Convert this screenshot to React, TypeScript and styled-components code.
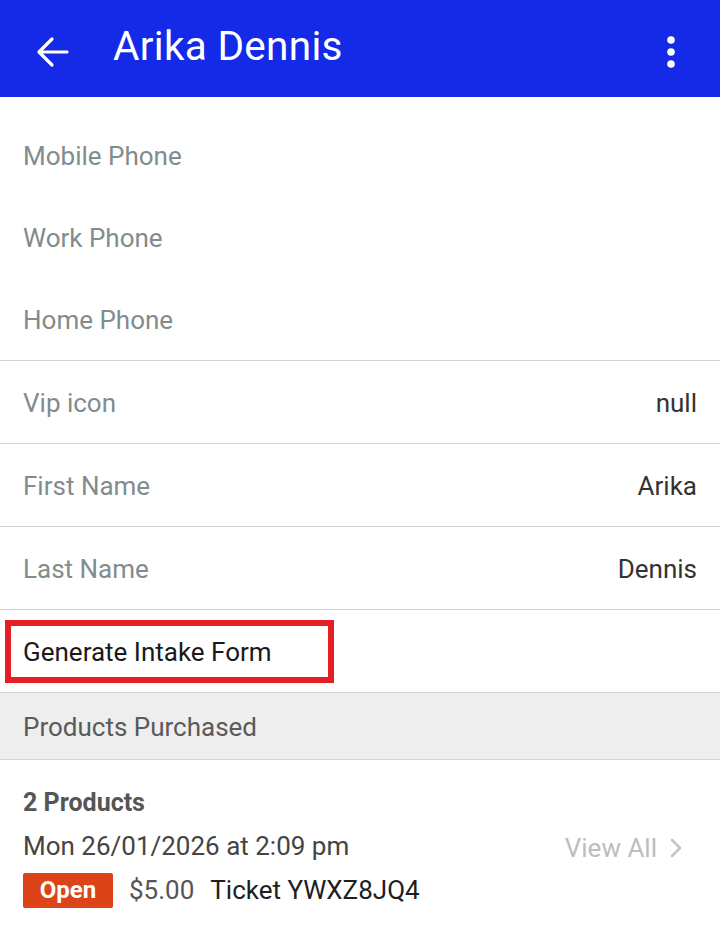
import React from "react";
import styled, { createGlobalStyle } from "styled-components";

const Global = createGlobalStyle`
  html, body { margin: 0; padding: 0; background: #ffffff; }
  body { font-family: Roboto, "Noto Sans", "Liberation Sans", sans-serif; }
  * { box-sizing: border-box; }
`;

const Page = styled.div`
  width: 720px;
  min-height: 925px;
  background: #ffffff;
  display: flex;
  flex-direction: column;
`;

const AppBar = styled.header`
  height: 97px;
  background: #142ae6;
  display: flex;
  align-items: center;
  padding: 0 32px 0 36px;
  color: #ffffff;
`;

const IconButton = styled.div`
  width: 34px;
  height: 34px;
  display: flex;
  align-items: center;
  justify-content: center;
  flex-shrink: 0;
  margin-top: 6px;
`;

const Title = styled.h1`
  margin: -4px 0 0 43px;
  font-size: 40.5px;
  font-weight: 400;
  letter-spacing: 0.3px;
  flex: 1;
  line-height: 1;
`;

const PhoneGroup = styled.section`
  padding-top: 17px;
  border-bottom: 1px solid #d4d4d4;
`;

const Row = styled.div<{ $divided?: boolean }>`
  height: ${(p) => (p.$divided ? "83px" : "82px")};
  display: flex;
  align-items: center;
  justify-content: space-between;
  padding: 2px 23px 0 23px;
  font-size: 26px;
  border-bottom: ${(p) => (p.$divided ? "1px solid #d4d4d4" : "none")};
`;

const Label = styled.span`
  color: #818c8e;
`;

const Value = styled.span`
  color: #333333;
`;

const ActionRow = styled.div`
  height: 83px;
  display: flex;
  align-items: center;
  padding: 0 5px;
  border-bottom: 1px solid #d4d4d4;
`;

const Highlight = styled.div`
  width: 329px;
  height: 63px;
  border: 6px solid #e51d25;
  display: flex;
  align-items: center;
  padding: 1px 0 0 12px;
  font-size: 26px;
  color: #1a1a1a;
`;

const SectionHeader = styled.div`
  height: 67px;
  background: #eeeeee;
  display: flex;
  align-items: center;
  padding: 2px 23px 0 23px;
  font-size: 26px;
  color: #5a5a5a;
  border-bottom: 1px solid #d4d4d4;
`;

const ProductCard = styled.div`
  display: flex;
  align-items: center;
  justify-content: space-between;
  padding: 21px 23px 0 23px;
`;

const ProductInfo = styled.div`
  display: flex;
  flex-direction: column;
`;

const ProductCount = styled.div`
  font-size: 25px;
  font-weight: 700;
  color: #555555;
  height: 44px;
  display: flex;
  align-items: center;
  margin-top: -1px;
`;

const DateLine = styled.div`
  font-size: 26px;
  color: #444444;
  height: 44px;
  display: flex;
  align-items: center;
`;

const StatusLine = styled.div`
  height: 44px;
  display: flex;
  align-items: center;
  gap: 16px;
  font-size: 26px;
`;

const Badge = styled.span`
  background: #dc4319;
  color: #ffffff;
  font-weight: 700;
  font-size: 24px;
  height: 35px;
  width: 90px;
  border-radius: 2px;
  display: flex;
  align-items: center;
  justify-content: center;
`;

const Price = styled.span`
  color: #555555;
`;

const Ticket = styled.span`
  color: #1e1e1e;
`;

const ViewAll = styled.div`
  display: flex;
  align-items: center;
  gap: 12px;
  font-size: 26px;
  color: #bdbdbd;
  margin-top: 3px;
  margin-right: 14px;
`;

const BackIcon = () => (
  <svg width="34" height="34" viewBox="0 0 34 34" fill="none">
    <path
      d="M31 17H4M16 4L3 17l13 13"
      stroke="#ffffff"
      strokeWidth="3.2"
      strokeLinecap="round"
      strokeLinejoin="round"
    />
  </svg>
);

const KebabIcon = () => (
  <svg width="14" height="36" viewBox="0 0 14 36">
    <circle cx="7" cy="6" r="3.8" fill="#ffffff" />
    <circle cx="7" cy="18" r="3.8" fill="#ffffff" />
    <circle cx="7" cy="30" r="3.8" fill="#ffffff" />
  </svg>
);

const Chevron = () => (
  <svg width="14" height="22" viewBox="0 0 14 22" fill="none">
    <path d="M3 3l8 8-8 8" stroke="#c4c4c4" strokeWidth="2.6" strokeLinecap="round" strokeLinejoin="round" />
  </svg>
);

const phoneRows = ["Mobile Phone", "Work Phone", "Home Phone"];
const fieldRows: [string, string][] = [
  ["Vip icon", "null"],
  ["First Name", "Arika"],
  ["Last Name", "Dennis"],
];

export default function App() {
  return (
    <Page>
      <Global />
      <AppBar>
        <IconButton>
          <BackIcon />
        </IconButton>
        <Title>Arika Dennis</Title>
        <IconButton>
          <KebabIcon />
        </IconButton>
      </AppBar>
      <PhoneGroup>
        {phoneRows.map((l) => (
          <Row key={l}>
            <Label>{l}</Label>
          </Row>
        ))}
      </PhoneGroup>
      {fieldRows.map(([l, v]) => (
        <Row key={l} $divided>
          <Label>{l}</Label>
          <Value>{v}</Value>
        </Row>
      ))}
      <ActionRow>
        <Highlight>Generate Intake Form</Highlight>
      </ActionRow>
      <SectionHeader>Products Purchased</SectionHeader>
      <ProductCard>
        <ProductInfo>
          <ProductCount>2 Products</ProductCount>
          <DateLine>Mon 26/01/2026 at 2:09 pm</DateLine>
          <StatusLine>
            <Badge>Open</Badge>
            <Price>$5.00</Price>
            <Ticket>Ticket YWXZ8JQ4</Ticket>
          </StatusLine>
        </ProductInfo>
        <ViewAll>
          View All
          <Chevron />
        </ViewAll>
      </ProductCard>
    </Page>
  );
}
